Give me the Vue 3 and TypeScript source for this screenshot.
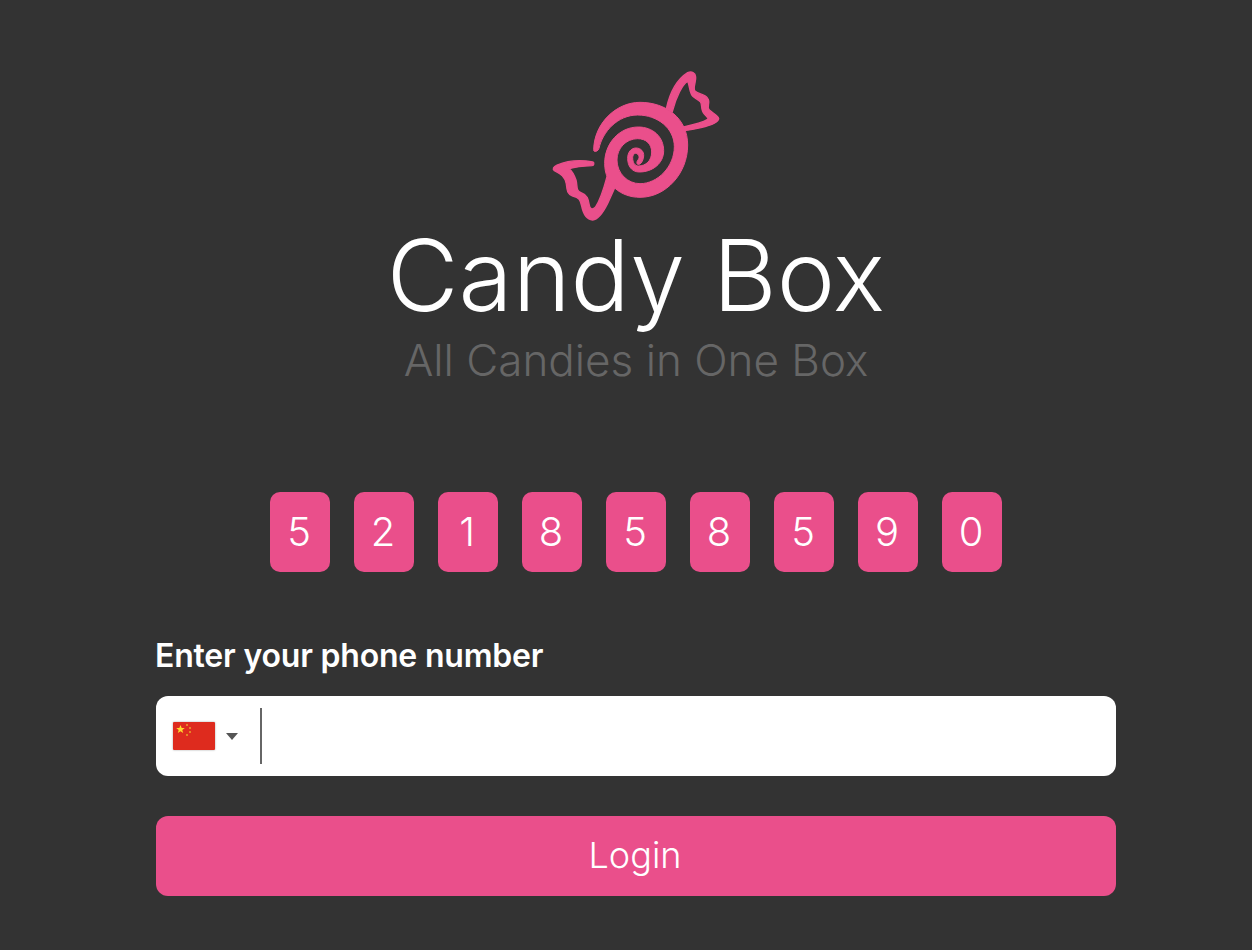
<script setup lang="ts">
const digits: string[] = ['5', '2', '1', '8', '5', '8', '5', '9', '0']
</script>

<template>
  <div class="page">
    <svg class="logo" viewBox="0 0 570 510" width="190" height="170" aria-label="Candy Box logo">
      <path class="pink body" d="M158 268C160 190 225 127 297 127C375 127 440 175 440 255C440 340 375 412 297 412C240 412 191 375 191 310C191 250 235 201 292 201C335 201 368 230 368 272C368 310 335 336 295 336C272 336 260 318 260 295C260 277 270 264 285 264C300 264 309 275 308 288C307 300 302 310 295 313C288 316 286 308 289 303C292 299 295 294 294 290C293 284 288 280 284 280C278 280 275 287 275 293C275 308 282 318 292 318C315 318 332 302 332 276C332 252 315 236 290 236C255 236 228 265 228 300C228 340 260 371 297 371C350 371 400 320 400 260C400 205 350 165 290 165C230 165 185 215 174 265C171 276 156 278 158 268Z" />
      <path class="pink wing" d="M376 146C385 105 405 60 440 38C452 33 463 38 464 50C466 65 456 80 461 92C470 104 490 100 500 115C510 128 495 140 505 150C515 160 532 165 533 176C532 190 500 198 480 203C462 207 445 210 430 212L426 201C450 196 480 190 500 178C503 175 498 170 490 162C478 150 485 135 478 125C468 115 455 115 450 100C445 88 445 75 440 64C425 72 405 110 394 155Z" />
      <path class="pink wing" d="M155 306C125 300 85 300 48 315C38 320 33 326 40 332C60 342 72 350 76 372C78 390 78 402 95 408C115 412 118 420 122 438C126 458 135 478 155 480C175 478 190 450 200 430C210 410 216 395 222 382L198 350C190 380 178 420 163 442C155 450 147 448 145 436C142 418 140 405 120 398C104 392 110 378 105 360C100 345 95 335 85 326C105 320 130 318 153 317C160 316 160 307 155 306Z" />
    </svg>

    <h1 class="title">Candy Box</h1>
    <p class="subtitle">All Candies in One Box</p>

    <div class="digits">
      <div v-for="(d, i) in digits" :key="i" class="digit">{{ d }}</div>
    </div>

    <div class="form">
      <label class="label">Enter your phone number</label>
      <div class="phone">
        <svg class="flag" viewBox="0 0 42 28" width="42" height="28">
          <rect width="42" height="28" fill="#de2b1e" />
          <polygon fill="#ffd92e" points="7.5,3 8.7,6 11.8,6 9.3,8 10.2,11 7.5,9.2 4.8,11 5.7,8 3.2,6 6.3,6" />
          <g fill="#e8a32a">
            <circle cx="14" cy="3" r="1" />
            <circle cx="17" cy="6" r="1" />
            <circle cx="17" cy="10" r="1" />
            <circle cx="14" cy="13" r="1" />
          </g>
        </svg>
        <span class="caret"></span>
        <span class="divider"></span>
      </div>
      <button class="login" type="button">Login</button>
    </div>
  </div>
</template>

<style scoped>
.page {
  min-height: 950px;
  box-sizing: border-box;
  background: #333333;
  display: flex;
  flex-direction: column;
  align-items: center;
  padding: 60px 0 0 20px;
  font-family: Inter, "Liberation Sans", sans-serif;
  color: #fff;
}
.logo {
  display: block;
}
.pink {
  fill: #ea4f8b;
  stroke: #ea4f8b;
  stroke-linejoin: round;
}
.body {
  stroke-width: 3;
}
.wing {
  stroke-width: 4;
}
.title {
  margin: -4px 0 0;
  font-size: 98.5px;
  line-height: 100px;
  font-weight: 300;
  letter-spacing: 0;
}
.subtitle {
  margin: 10px 0 0;
  font-size: 44px;
  line-height: 48px;
  font-weight: 300;
  color: #666666;
}
.digits {
  display: flex;
  gap: 24px;
  margin-top: 108px;
}
.digit {
  width: 60px;
  height: 80px;
  box-sizing: border-box;
  padding: 0 2px 2px 0;
  border-radius: 10px;
  background: #ea4f8b;
  display: flex;
  align-items: center;
  justify-content: center;
  font-size: 40px;
  font-weight: 300;
}
.form {
  width: 960px;
  margin-top: 62px;
  display: flex;
  flex-direction: column;
}
.label {
  font-size: 32px;
  line-height: 44px;
  font-weight: 600;
  letter-spacing: -0.2px;
  margin-left: -1px;
}
.phone {
  margin-top: 18px;
  height: 80px;
  border-radius: 12px;
  background: #fff;
  display: flex;
  align-items: center;
  padding-left: 17px;
}
.flag {
  display: block;
  border-radius: 1px;
  box-shadow: 0 0 2px rgba(0, 0, 0, 0.4);
}
.caret {
  width: 0;
  height: 0;
  margin-left: 11px;
  border-left: 6px solid transparent;
  border-right: 6px solid transparent;
  border-top: 7px solid #555555;
}
.divider {
  width: 2px;
  height: 56px;
  margin-left: 22px;
  background: #666666;
}
.login {
  margin-top: 40px;
  height: 80px;
  border: 0;
  border-radius: 12px;
  background: #ea4f8b;
  color: #fff;
  font-family: inherit;
  font-size: 36px;
  font-weight: 300;
  padding: 0 2px 2px 0;
}
</style>

<style>
html,
body {
  background: #333333;
}
</style>
